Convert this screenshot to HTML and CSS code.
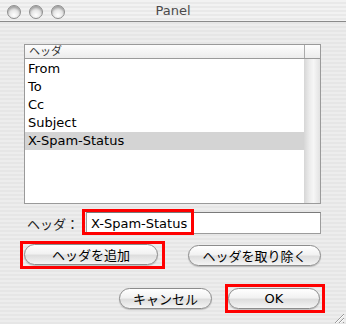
FILE: index.html
```html
<!DOCTYPE html>
<html lang="ja">
<head>
    <meta charset="UTF-8">
    <title>Panel</title>
    <link rel="stylesheet" href="styles.css">
</head>
<body>
    <div class="window">
        <div class="titlebar">
            <div class="lights">
                <span class="light"></span>
                <span class="light"></span>
                <span class="light"></span>
            </div>
            <div class="title">Panel</div>
        </div>

        <div class="content">
            <div class="table">
                <div class="thead">
                    <div class="th">ヘッダ</div>
                    <div class="th corner"></div>
                </div>
                <div class="tbody">
                    <div class="rows">
                        <div class="row">From</div>
                        <div class="row">To</div>
                        <div class="row">Cc</div>
                        <div class="row">Subject</div>
                        <div class="row selected">X-Spam-Status</div>
                    </div>
                    <div class="scrollbar"></div>
                </div>
            </div>

            <div class="fieldRow">
                <label class="label">ヘッダ：</label>
                <div class="field">X-Spam-Status</div>
                <div class="fieldMark"></div>
            </div>

            <div class="btnRow">
                <span class="mark addMark"><button class="btn">ヘッダを追加</button></span>
                <button class="btn removeBtn">ヘッダを取り除く</button>
            </div>

            <div class="btnRow footer">
                <button class="btn cancelBtn">キャンセル</button>
                <span class="mark okMark"><button class="btn okBtn">OK</button></span>
            </div>
        </div>

        <div class="grip">
            <svg width="11" height="11" viewBox="0 0 11 11">
                <path d="M1 10 L10 1 M5 10 L10 5 M9 10 L10 9" stroke="#999" stroke-width="1"/>
                <path d="M2 10 L10 2 M6 10 L10 6" stroke="#fff" stroke-width="1"/>
            </svg>
        </div>
    </div>
</body>
</html>
```

FILE: styles.css
```css
body {
    margin: 0;
    font-family: 'DejaVu Sans', 'Noto Sans CJK JP', sans-serif;
    font-size: 13px;
    color: #000;
}

.window {
    position: relative;
    width: 346px;
    height: 324px;
    overflow: hidden;
    background: repeating-linear-gradient(to bottom, #ededed 0px, #ededed 2px, #e6e6e6 2px, #e6e6e6 4px);
}

.titlebar {
    height: 21px;
    border-bottom: 1px solid #8a8a8a;
    display: flex;
    align-items: center;
    position: relative;
    background: repeating-linear-gradient(to bottom, #f2f2f2 0px, #f2f2f2 2px, #e9e9e9 2px, #e9e9e9 4px);
}

.lights {
    display: flex;
    gap: 8px;
    padding-left: 7px;
    padding-top: 3px;
}

.light {
    width: 12px;
    height: 12px;
    border-radius: 50%;
    border: 1px solid #8e8e8e;
    background: radial-gradient(circle at 50% 75%, #ffffff 0%, #e6e6e6 45%, #b4b4b4 100%);
    box-shadow: inset 0 2px 2px rgba(0, 0, 0, 0.2);
}

.title {
    position: absolute;
    left: 0;
    right: 0;
    top: 3px;
    text-align: center;
    color: #4a4a4a;
    font-size: 13px;
}

.content {
    padding: 22px 25px 0 24px;
    display: flex;
    flex-direction: column;
}

.table {
    height: 158px;
    border: 1px solid #9a9a9a;
    background: #fff;
    display: flex;
    flex-direction: column;
}

.thead {
    display: flex;
    height: 13px;
    border-bottom: 1px solid #9a9a9a;
    background: linear-gradient(to bottom, #fdfdfd, #ececec);
}

.th {
    flex: 1;
    font-size: 11px;
    line-height: 13px;
    padding-left: 4px;
    color: #333;
}

.th.corner {
    flex: none;
    width: 15px;
    padding: 0;
    border-left: 1px solid #aaa;
}

.tbody {
    flex: 1;
    display: flex;
}

.rows {
    flex: 1;
    padding-top: 1px;
}

.row {
    height: 18px;
    line-height: 18px;
    padding-left: 3px;
    font-size: 13px;
}

.row.selected {
    background: #d4d4d4;
}

.scrollbar {
    width: 16px;
    background: linear-gradient(to right, #d6d6d6, #ececec 35%, #f6f6f6 60%, #e2e2e2);
}

.fieldRow {
    position: relative;
    display: flex;
    align-items: center;
    margin-top: 8px;
    height: 22px;
}

.label {
    width: 59px;
    padding-left: 3px;
    font-size: 13px;
    color: #222;
}

.field {
    flex: 1;
    height: 20px;
    line-height: 21px;
    border: 1px solid #9c9c9c;
    border-top-color: #7a7a7a;
    background: #fff;
    padding-left: 4px;
    font-size: 13px;
}

.fieldMark {
    position: absolute;
    left: 58px;
    top: -3px;
    width: 106px;
    height: 20px;
    border: 3px solid #f00;
}

.btnRow {
    display: flex;
    justify-content: space-between;
    align-items: center;
    margin-top: 7px;
}

.footer {
    justify-content: flex-end;
    gap: 13px;
    margin-top: 15px;
}

.mark {
    border: 3px solid #f00;
    display: flex;
}

.addMark {
    margin-left: -4px;
    padding: 0 4px 1px 1px;
}

.okMark {
    margin-right: -4px;
    padding: 1px 2px 1px 0;
}

.btn {
    height: 21px;
    border: 1px solid #8c8c8c;
    border-radius: 11px;
    background: linear-gradient(to bottom, #ffffff 0%, #f2f2f2 45%, #dedede 55%, #f4f4f4 100%);
    box-shadow: 0 1px 1px rgba(0, 0, 0, 0.2);
    font-family: 'DejaVu Sans', 'Noto Sans CJK JP', sans-serif;
    font-size: 13px;
    color: #000;
    padding: 0;
    width: 134px;
}

.removeBtn {
    width: 133px;
}

.cancelBtn {
    width: 93px;
}

.okBtn {
    width: 92px;
}

.grip {
    position: absolute;
    right: 1px;
    bottom: 1px;
    width: 11px;
    height: 11px;
}
```
